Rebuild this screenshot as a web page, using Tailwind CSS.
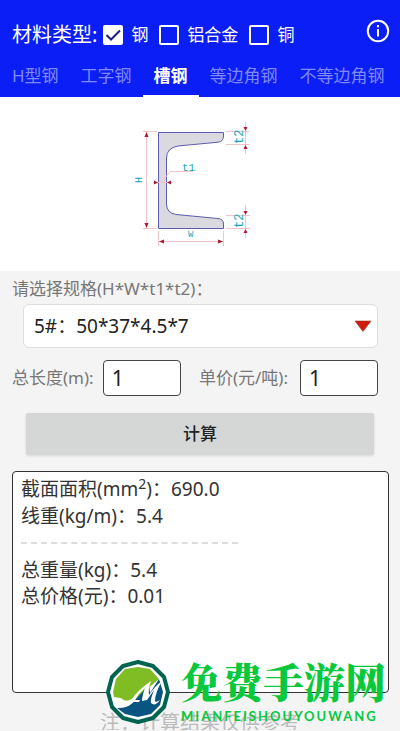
<!DOCTYPE html>
<html lang="zh-CN">
<head>
  <meta charset="UTF-8" />
  <meta name="viewport" content="width=device-width, initial-scale=1.0" />
  <title>型材重量计算</title>
  <script src="https://cdn.jsdelivr.net/npm/@tailwindcss/browser@4"></script>
</head>
<body class="relative min-h-screen overflow-x-hidden bg-[#f4f4f4] font-['Noto_Sans','Noto_Sans_CJK_SC',sans-serif] text-[#333]">

  <!-- Encabezado: material y pestañas -->
  <header class="bg-[#0b1ef5] text-white">
    <div class="flex h-14 items-center pt-[14px] pl-3 pr-[10px]">
      <span class="mr-[6px] text-[20px] leading-6">材料类型:</span>
      <div class="flex items-center gap-[11px] text-[17px] leading-6">
        <label class="flex items-center gap-2">
          <span class="relative flex size-5">
            <input type="checkbox" checked class="peer size-5 appearance-none rounded-[2px] border-2 border-white checked:bg-white" />
            <svg class="pointer-events-none absolute inset-0 hidden size-5 peer-checked:block" viewBox="0 0 20 20" fill="none" stroke="#1a2080" stroke-width="2"><path d="M3.5 10l4.5 4.500L17 5.500" /></svg>
          </span>钢
        </label>
        <label class="flex items-center gap-2"><input type="checkbox" class="size-5 appearance-none rounded-[2px] border-2 border-white checked:bg-white" />铝合金</label>
        <label class="flex items-center gap-2"><input type="checkbox" class="size-5 appearance-none rounded-[2px] border-2 border-white checked:bg-white" />铜</label>
      </div>
      <button class="mb-2 ml-auto" aria-label="关于">
        <svg class="size-6" viewBox="0 0 24 24" fill="none" stroke="#fff" stroke-width="2"><circle cx="12" cy="12" r="10.200" /><path d="M12 10v7.500M12 6v2.300" /></svg>
      </button>
    </div>
    <nav class="flex h-[41px] pl-px text-[17px] whitespace-nowrap text-[#8089fa]">
      <button class="border-b-2 border-transparent px-[11px]">H型钢</button>
      <button class="border-b-2 border-transparent px-[11px]">工字钢</button>
      <button class="border-b-2 border-white px-[11px] font-bold text-white">槽钢</button>
      <button class="border-b-2 border-transparent px-[11px]">等边角钢</button>
      <button class="border-b-2 border-transparent px-[11px]">不等边角钢</button>
    </nav>
  </header>

  <!-- Sección del perfil -->
  <section class="flex justify-center bg-white py-4">
    <svg class="h-[142px] w-[160px]" viewBox="120 113 160 142" fill="none" font-family="Liberation Mono, monospace">
      <path d="M158.500 132.500H223.500V136Q223.500 141.500 218 142.200L178 146Q166.500 148 166.500 158V204Q166.500 213 176 214.500L218 218.500Q223.500 219 223.500 224V228.500H158.500Z" fill="#d9d9df" stroke="#5c5cb0" stroke-width="1" />
      <g stroke="#f0c4c8" stroke-width="1">
        <path d="M143 131.500H157M143 228.500H157M146.500 132V228M158.500 231V246M223.500 231V246M159 241.500H223" />
        <path d="M226 131.500H250M226 144.500H250M245.500 122V154M226 215.500H250M226 228.500H250M245.500 205V238" />
        <path d="M153 182.500H172M162 182L170 171.500H193" />
      </g>
      <g fill="#a81830">
        <path d="M146.500 132l-2 5h4zM146.500 228l-2-5h4zM159 241.500l5-2v4zM223 241.500l-5-2v4z" />
        <path d="M245.500 131l-2-4h4zM245.500 145l-2 4h4zM245.500 215l-2-4h4zM245.500 229l-2 4h4z" />
        <path d="M158 182.500l-4-2v4zM167 182.500l4-2v4z" />
      </g>
      <g fill="#1aa5bd" font-size="10">
        <text x="182" y="171" font-size="11">t1</text>
        <text x="188" y="237" font-size="9">W</text>
        <text transform="translate(142 183) rotate(-90)">H</text>
        <text transform="translate(243 144) rotate(-90)" font-size="12">t2</text>
        <text transform="translate(243 228) rotate(-90)" font-size="12">t2</text>
      </g>
    </svg>
  </section>

  <!-- Formulario -->
  <main class="px-3">
    <label for="spec" class="block pt-1 text-[17px] leading-7 text-[#777]">请选择规格(H*W*t1*t2)：</label>
    <div class="relative mt-px mr-[10px] ml-[11px]">
      <select id="spec" class="h-11 w-full appearance-none rounded-md border border-[#ddd] bg-white pr-8 pl-[10px] text-[19px] text-[#222]">
        <option>5#：50*37*4.5*7</option>
      </select>
      <svg class="pointer-events-none absolute top-4 right-[6px] h-3 w-[18px]" viewBox="0 0 18 12"><path d="M1 1H17L9 11.500Z" fill="#d01c0c" stroke="#8c2018" stroke-width="0.500" /></svg>
    </div>

    <div class="mt-3 mr-[10px] flex items-center text-[17px] text-[#777]">
      <label for="len">总长度(m):</label>
      <input id="len" type="text" value="1" class="ml-[9px] h-9 w-[78px] rounded border border-[#444] bg-white px-2 text-[21px] text-[#222]" />
      <label for="price" class="ml-auto">单价(元/吨):</label>
      <input id="price" type="text" value="1" class="ml-3 h-9 w-[78px] rounded border border-[#444] bg-white px-2 text-[21px] text-[#222]" />
    </div>

    <div class="mt-[17px] px-[14px]">
      <button class="h-[42px] w-full rounded-[2px] bg-[#d5d7d6] text-[17px] font-medium text-[#222] shadow-sm">计算</button>
    </div>

    <!-- Resultado -->
    <section class="mt-4 -mr-px min-h-[222px] rounded border border-[#333] bg-white px-2 pt-1 text-[19px] leading-[26px]">
      <p>截面面积(mm<sup class="text-[14px]">2</sup>)：690.0</p>
      <p class="mt-px">线重(kg/m)：5.4</p>
      <hr class="my-[13px] w-[217px] border-t-2 border-dashed border-[#ddd]" />
      <p>总重量(kg)：5.4</p>
      <p>总价格(元)：0.01</p>
    </section>
    <p class="h-[37px] overflow-hidden pt-4 text-center text-[20px] leading-7 text-[#bbb]">注：计算结果仅供参考</p>
  </main>

  <!-- Marca de agua -->
  <div class="absolute top-[659px] left-[104px] flex items-start gap-[10px]">
    <svg class="h-[66px] w-[67px]" viewBox="0 0 67 66">
      <path d="M34 3L49 7L60 18L64 33L60 48L49 59L34 63L19 59L8 48L4 33L8 18L19 7Z" fill="#fff" stroke="#006450" stroke-width="4" stroke-linejoin="round" />
      <path d="M34 8L46 10L55 20L41 32L31 42Q24 46 16 39L10 38L9 33L12 20L21 10Z" fill="#80bd25" />
      <path d="M55 20L59 33L56 46L47 55L34 58L21 55L13 49Q25 50 32 40L45 26L46 34Z" fill="#075580" />
      <path d="M9 38Q13 42 17 39Q21 44 28 40Q34 31 47 22Q44 30 45 36Q51 27 58 22Q51 34 51 42Q52 44 56 41Q51 48 47 44Q46 41 50 31L43 41L38 42Q38 37 41 29Q35 34 31 41L36 41L35 43L29 43Q24 49 17 48Q11 45 9 38Z" fill="#fff" />
    </svg>
    <div class="whitespace-nowrap text-[#08c83c]">
      <p class="font-['Noto_Serif_CJK_SC','Noto_Sans_CJK_SC',serif] text-[41px] leading-[44px] font-black">免费手游网</p>
      <p class="mt-[5px] font-['Lato',sans-serif] text-[13px] leading-4 font-bold tracking-[2px]">MIANFEISHOUYOUWANG</p>
    </div>
  </div>

</body>
</html>
